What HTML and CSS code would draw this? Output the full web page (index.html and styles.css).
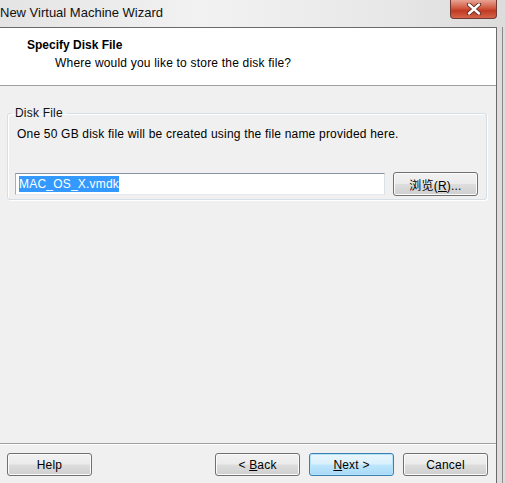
FILE: index.html
```html
<!doctype html>
<html lang="en">
  <head>
    <meta charset="UTF-8" />
    <title>New Virtual Machine Wizard</title>
    <link rel="stylesheet" href="styles.css">
  </head>
  <body>
    <div class="window">
      <div class="titlebar">
        <span class="title">New Virtual Machine Wizard</span>
        <div class="close">
          <svg width="18" height="12" viewBox="0 0 18 12">
            <path d="M4 1.5 L14 10.5 M14 1.5 L4 10.5" stroke="#5a2a22" stroke-width="4.2" stroke-linecap="round" />
            <path d="M4 1.5 L14 10.5 M14 1.5 L4 10.5" stroke="#ffffff" stroke-width="2.4" stroke-linecap="round" />
          </svg>
        </div>
      </div>
      <div class="frame">
        <div class="client">
          <div class="header">
            <div class="heading">Specify Disk File</div>
            <div class="subheading">Where would you like to store the disk file?</div>
          </div>
          <div class="content">
            <fieldset class="group">
              <legend>Disk File</legend>
              <p class="info">One 50 GB disk file will be created using the file name provided here.</p>
              <div class="file-row">
                <div class="field"><span class="selected">MAC_OS_X.vmdk</span></div>
                <button class="btn browse" type="button">浏览(<u>R</u>)...</button>
              </div>
            </fieldset>
          </div>
          <div class="footer">
            <button class="btn" type="button">Help</button>
            <div class="spacer"></div>
            <button class="btn" type="button">&lt; <u>B</u>ack</button>
            <button class="btn default" type="button"><u>N</u>ext &gt;</button>
            <button class="btn" type="button">Cancel</button>
          </div>
        </div>
        <div class="edge"></div>
      </div>
    </div>
  </body>
</html>
```

FILE: styles.css
```css
body {
  margin: 0;
  font-family: "Liberation Sans", Arial, "Noto Sans CJK SC", sans-serif;
  font-size: 12px;
  letter-spacing: 0.2px;
  color: #000;
}
.window {
  width: 505px;
  height: 483px;
  display: flex;
  flex-direction: column;
  background: linear-gradient(90deg, #e4e4e4, #f2f2f2 40%, #e8e8e8 75%, #dcdcdc);
  overflow: hidden;
}
.titlebar {
  height: 27px;
  display: flex;
  align-items: flex-start;
  flex-shrink: 0;
}
.title {
  margin-top: 5px;
  font-size: 13px;
  letter-spacing: 0;
  color: #111;
}
.close {
  margin-left: auto;
  margin-right: 8px;
  width: 45px;
  height: 18px;
  border: 1px solid #6e3a33;
  border-top: none;
  border-radius: 0 0 4px 4px;
  background: linear-gradient(#e8a493, #d0583f 45%, #c03a22 60%, #d6654a);
  display: flex;
  align-items: center;
  justify-content: center;
}
.close svg {
  display: block;
}
.frame {
  flex: 1;
  display: flex;
  min-height: 0;
}
.client {
  width: 496px;
  border-top: 1px solid #6a6a6a;
  border-right: 1px solid #6a6a6a;
  background: #f0f0f0;
  display: flex;
  flex-direction: column;
}
.edge {
  width: 5px;
  border-right: 1px solid #8a8a8a;
}
.header {
  height: 58px;
  background: #fff;
  border-bottom: 1px solid #a0a0a0;
  padding: 10px 0 0 27px;
  box-sizing: border-box;
  flex-shrink: 0;
}
.heading {
  font-weight: bold;
  font-size: 12px;
  letter-spacing: 0;
}
.subheading {
  margin: 4px 0 0 28px;
}
.content {
  flex: 1;
  padding: 20px 9px 0 7px;
}
.group {
  margin: 0;
  min-width: 0;
  padding: 3px 8px 3px 7px;
  border: 1px solid #d5dfe5;
  border-radius: 3px;
  box-shadow: inset 1px 1px 0 #fff, 1px 1px 0 #fff;
}
.group legend {
  padding: 0 3px;
  margin-left: -3px;
  color: #111;
}
.info {
  margin: 4px 0 0 2px;
}
.file-row {
  display: flex;
  align-items: center;
  gap: 8px;
  margin-top: 31px;
}
.field {
  width: 370px;
  height: 22px;
  border: 1px solid #abadb3;
  border-top-color: #8b94a2;
  border-right-color: #dbdfe6;
  border-bottom-color: #e3e9ef;
  background: #fff;
  padding: 0 3px;
  box-sizing: border-box;
  display: flex;
  align-items: center;
}
.selected {
  background: #3399ff;
  color: #fff;
  padding: 1px 0;
  line-height: 14px;
}
.btn {
  width: 85px;
  height: 23px;
  font-family: inherit;
  font-size: 12px;
  letter-spacing: 0.2px;
  color: #000;
  border: 1px solid #707070;
  border-radius: 3px;
  background: linear-gradient(#f2f2f2, #ebebeb 48%, #dddddd 52%, #cfcfcf);
  box-shadow: inset 0 0 0 1px #fbfbfb;
  padding: 0;
}
.browse {
  height: 24px;
}
.footer {
  height: 40px;
  box-sizing: border-box;
  border-top: 1px solid #a0a0a0;
  box-shadow: inset 0 1px 0 #fff;
  display: flex;
  align-items: flex-start;
  padding: 9px 8px 0 7px;
  gap: 9px;
  flex-shrink: 0;
}
.spacer {
  flex: 1;
}
.default {
  border-color: #3c7fb1;
  background: linear-gradient(#eaf6fd, #d9f0fc 48%, #bee6fd 52%, #a7d9f5);
  box-shadow: inset 0 0 0 1px #b5e3fb;
}
```
